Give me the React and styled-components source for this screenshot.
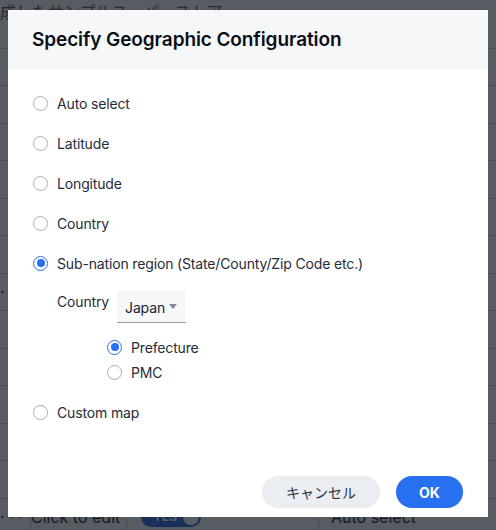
import React, { useState } from 'react';
import styled, { createGlobalStyle } from 'styled-components';

const GlobalStyle = createGlobalStyle`
  html, body {
    margin: 0;
    padding: 0;
    width: 496px;
    height: 530px;
    overflow: hidden;
    font-family: Inter, "Noto Sans", "Noto Sans CJK JP", sans-serif;
  }
  * { box-sizing: border-box; }
`;

const palette = {
  text: '#1d232f',
  muted: '#a5acba',
  blue: '#2770ef',
  header: '#f6f7f9',
  cancel: '#eaedf2',
};

const Page = styled.div`
  position: relative;
  width: 496px;
  height: 530px;
  overflow: hidden;
  background: #fff;
`;

/* underlying page, dimmed by the overlay */
const BackTitle = styled.div`
  height: 20px;
  margin-bottom: -9px;
  padding-top: 1px;
  font-size: 16px;
  line-height: 20px;
  color: #555a62;
  white-space: nowrap;
  font-family: "Noto Sans CJK JP", sans-serif;
`;

const BackRow = styled.div`
  display: grid;
  grid-template-columns: 30px 96px 192px 1fr;
  height: 37.5px;
  align-items: center;
  border-bottom: 1px solid #c9ced6;
  font-size: 16px;
  color: #1d232f;
`;

const BackCell = styled.div`
  height: 100%;
  display: flex;
  align-items: center;
  padding-left: ${(p) => p.$pad || 0}px;
  border-left: ${(p) => (p.$line ? '1px solid #c9ced6' : 'none')};
  white-space: nowrap;
  overflow: hidden;
`;

const Toggle = styled.span`
  display: inline-flex;
  align-items: center;
  gap: 6px;
  height: 20px;
  padding: 0 2px 0 12px;
  border-radius: 10px;
  background: #2f6fe0;
  color: #fff;
  font-size: 12px;
  font-weight: 700;

  &::after {
    content: '';
    width: 16px;
    height: 16px;
    border-radius: 50%;
    background: #fff;
  }
`;

const Overlay = styled.div`
  position: absolute;
  inset: 0;
  background: rgba(15, 21, 32, 0.7);
`;

const Modal = styled.div`
  position: absolute;
  left: 8px;
  top: 10px;
  width: 480px;
  height: 507px;
  background: #fff;
  display: flex;
  flex-direction: column;
`;

const Header = styled.div`
  height: 59px;
  flex-shrink: 0;
  background: ${palette.header};
  display: flex;
  align-items: center;
  padding: 0 24px;
`;

const Title = styled.h2`
  margin: 0;
  font-size: 19px;
  font-weight: 600;
  color: #0b0f17;
  letter-spacing: -0.1px;
`;

const Body = styled.div`
  flex: 1;
  padding: 24px 25px 0;
  display: flex;
  flex-direction: column;
  gap: 20px;
`;

const OptionRow = styled.label`
  display: flex;
  align-items: center;
  gap: 9px;
  height: 20px;
  font-size: 14px;
  letter-spacing: -0.15px;
  color: #262c38;
  cursor: pointer;
`;

const RadioCircle = styled.span`
  width: 15px;
  height: 15px;
  border-radius: 50%;
  flex-shrink: 0;
  border: ${(p) => (p.$checked ? `1.5px solid ${palette.blue}` : `1px solid ${palette.muted}`)};
  display: flex;
  align-items: center;
  justify-content: center;
  background: #fff;

  &::after {
    content: '';
    width: 8px;
    height: 8px;
    border-radius: 50%;
    background: ${(p) => (p.$checked ? palette.blue : 'transparent')};
  }
`;

const SubSection = styled.div`
  display: flex;
  flex-direction: column;
  margin-top: -2px;
`;

const CountryRow = styled.div`
  display: flex;
  align-items: flex-start;
  padding-left: 24px;
  gap: 8px;
`;

const CountryLabel = styled.span`
  font-size: 14px;
  letter-spacing: -0.15px;
  color: #262c38;
  line-height: 20px;
  padding-top: 1px;
`;

const Select = styled.button`
  display: flex;
  align-items: center;
  gap: 4px;
  height: 32px;
  padding: 2px 9px 0 8px;
  margin: 0;
  border: none;
  border-bottom: 1px solid #9aa0ab;
  background: ${palette.header};
  font-family: inherit;
  font-size: 14px;
  letter-spacing: -0.15px;
  color: ${palette.text};
`;

const Caret = styled.span`
  width: 0;
  height: 0;
  border-left: 4px solid transparent;
  border-right: 4px solid transparent;
  border-top: 5px solid #858b96;
  margin-top: -2px;
`;

const SubOptions = styled.div`
  display: flex;
  flex-direction: column;
  gap: 5px;
  padding-left: 74px;
  margin-top: 14px;
`;

const Footer = styled.div`
  display: flex;
  justify-content: flex-end;
  gap: 16px;
  padding: 0 25px 9px;
`;

const Button = styled.button`
  height: 32px;
  min-width: ${(p) => (p.$primary ? 67 : 118)}px;
  border: none;
  border-radius: 16px;
  padding: 0 16px;
  font-family: ${(p) => (p.$primary ? 'Inter, sans-serif' : '"Noto Sans CJK JP", sans-serif')};
  font-size: 14px;
  font-weight: ${(p) => (p.$primary ? 700 : 400)};
  background: ${(p) => (p.$primary ? palette.blue : palette.cancel)};
  color: ${(p) => (p.$primary ? '#fff' : '#2e3440')};
  cursor: pointer;
`;

const options = [
  { id: 'auto', label: 'Auto select' },
  { id: 'lat', label: 'Latitude' },
  { id: 'lng', label: 'Longitude' },
  { id: 'country', label: 'Country' },
  { id: 'sub', label: 'Sub-nation region (State/County/Zip Code etc.)' },
];

const Radio = ({ checked, label, onSelect }) => (
  <OptionRow onClick={onSelect}>
    <RadioCircle $checked={checked} />
    {label}
  </OptionRow>
);

const Background = () => (
  <div>
    <BackTitle>成したサンプルスーパーストア</BackTitle>
    {Array.from({ length: 13 }).map((_, i) => (
      <BackRow key={i}>
        <BackCell>{i === 7 ? '· · ·' : ''}</BackCell>
        <BackCell $line />
        <BackCell $line />
        <BackCell $line />
      </BackRow>
    ))}
    <BackRow>
      <BackCell>· · ·</BackCell>
      <BackCell $line>Click to edit</BackCell>
      <BackCell $line $pad={14}>
        <Toggle>YES</Toggle>
      </BackCell>
      <BackCell $line $pad={12}>Auto select</BackCell>
    </BackRow>
  </div>
);

export default function App() {
  const [geo, setGeo] = useState('sub');
  const [region, setRegion] = useState('prefecture');

  return (
    <Page>
      <GlobalStyle />
      <Background />
      <Overlay />
      <Modal>
        <Header>
          <Title>Specify Geographic Configuration</Title>
        </Header>
        <Body>
          {options.map((o) => (
            <Radio
              key={o.id}
              label={o.label}
              checked={geo === o.id}
              onSelect={() => setGeo(o.id)}
            />
          ))}
          <SubSection>
            <CountryRow>
              <CountryLabel>Country</CountryLabel>
              <Select>
                Japan
                <Caret />
              </Select>
            </CountryRow>
            <SubOptions>
              <Radio
                label="Prefecture"
                checked={region === 'prefecture'}
                onSelect={() => setRegion('prefecture')}
              />
              <Radio
                label="PMC"
                checked={region === 'pmc'}
                onSelect={() => setRegion('pmc')}
              />
            </SubOptions>
          </SubSection>
          <Radio label="Custom map" checked={geo === 'custom'} onSelect={() => setGeo('custom')} />
        </Body>
        <Footer>
          <Button>キャンセル</Button>
          <Button $primary>OK</Button>
        </Footer>
      </Modal>
    </Page>
  );
}
